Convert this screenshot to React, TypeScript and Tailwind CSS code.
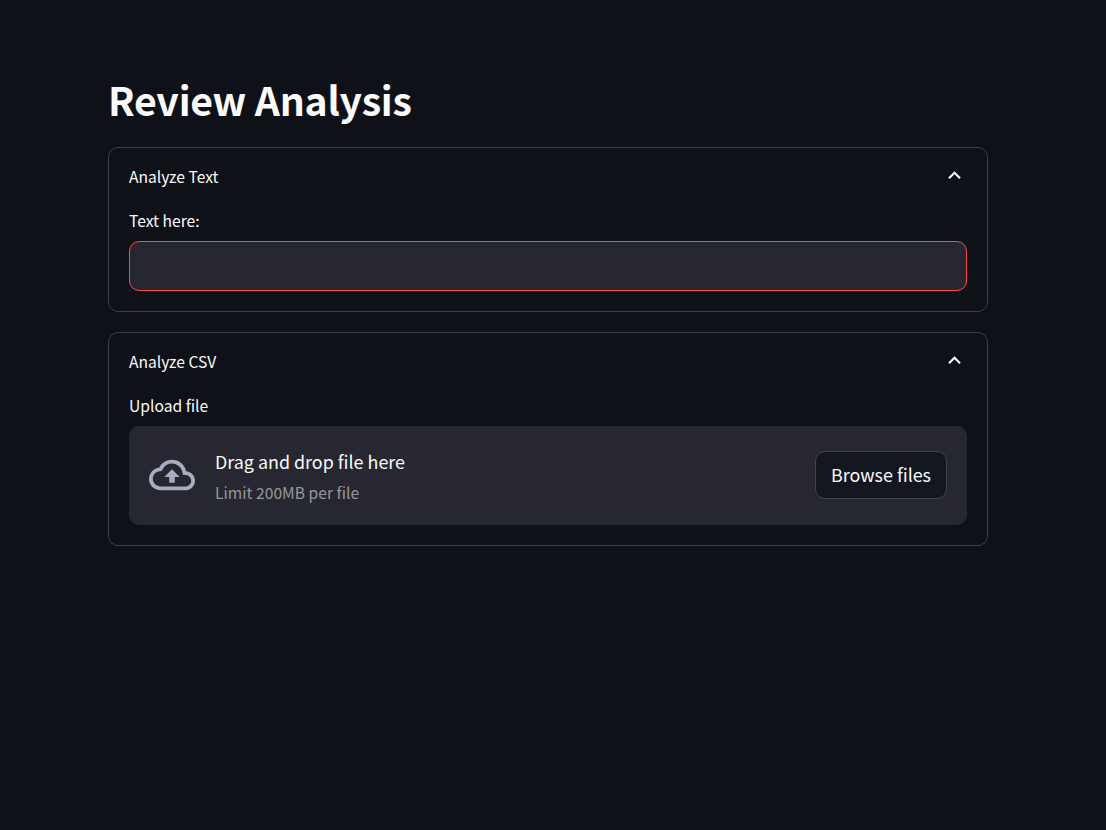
import type { ReactNode } from "react";

function Chevron() {
  return (
    <svg viewBox="0 0 24 24" className="mr-[0.5px] h-[25px] w-[25px] shrink-0 fill-[#fafafa]">
      <path d="M12 8l-6 6 1.41 1.41L12 10.83l4.59 4.58L18 14z" />
    </svg>
  );
}

function CloudUpload() {
  return (
    <svg viewBox="0 0 24 24" className="mb-0.5 h-[46px] w-[46px] shrink-0 fill-[#a8adc0]">
      <path d="M19.35 10.04A7.49 7.49 0 0 0 12 4C9.11 4 6.6 5.64 5.35 8.04A5.994 5.994 0 0 0 0 14c0 3.31 2.69 6 6 6h13c2.76 0 5-2.24 5-5 0-2.64-2.05-4.78-4.65-4.96zM19 18H6c-2.21 0-4-1.79-4-4 0-2.05 1.53-3.76 3.56-3.97l1.07-.11.5-.95A5.469 5.469 0 0 1 12 6c2.62 0 4.88 1.86 5.39 4.43l.3 1.5 1.53.11A2.98 2.98 0 0 1 22 15c0 1.65-1.35 3-3 3zM8 13h2.55v3h2.9v-3H16l-4-4z" />
    </svg>
  );
}

function Expander({ title, children }: { title: string; children: ReactNode }) {
  return (
    <section className="rounded-[10px] border border-[#3d4044] px-5 pb-5">
      <header className="mb-0.5 flex h-14 items-center justify-between">
        <span className="mt-0.5 text-[15.65px] leading-7">{title}</span>
        <div className="-mt-0.5">
          <Chevron />
        </div>
      </header>
      {children}
    </section>
  );
}

export default function App() {
  return (
    <div className="flex h-[830px] flex-col bg-[#0e1117] pr-[118px] pl-[108px] font-['Noto_Sans_CJK_SC','Source_Sans_Pro',sans-serif] text-[#fafafa]">
      <h1 className="mt-[69px] text-[39.2px] leading-[60px] font-bold tracking-[-0.27px]">Review Analysis</h1>
      <main className="mt-[18px] flex flex-col gap-5">
        <Expander title="Analyze Text">
          <label className="block">
            <span className="block h-[35px] text-[15.65px] leading-[30px]">Text here:</span>
            <input
              type="text"
              className="block h-[50px] w-full rounded-[10px] border border-[#ff4b4b] bg-[#262730] px-3 outline-none"
            />
          </label>
        </Expander>
        <Expander title="Analyze CSV">
          <div className="h-[35px] text-[15.65px] leading-[30px]">Upload file</div>
          <div className="flex h-[99px] items-center rounded-[10px] bg-[#262730] px-5">
            <CloudUpload />
            <div className="ml-5 flex flex-col">
              <span className="text-[17.9px] leading-8">Drag and drop file here</span>
              <span className="text-[15.6px] leading-[30px] tracking-[0.03px] text-[#979799]">Limit 200MB per file</span>
            </div>
            <button className="mb-0.5 ml-auto h-12 w-[132px] rounded-[10px] border border-[#41444c] bg-[#131720] text-[17.9px]">
              Browse files
            </button>
          </div>
        </Expander>
      </main>
    </div>
  );
}
